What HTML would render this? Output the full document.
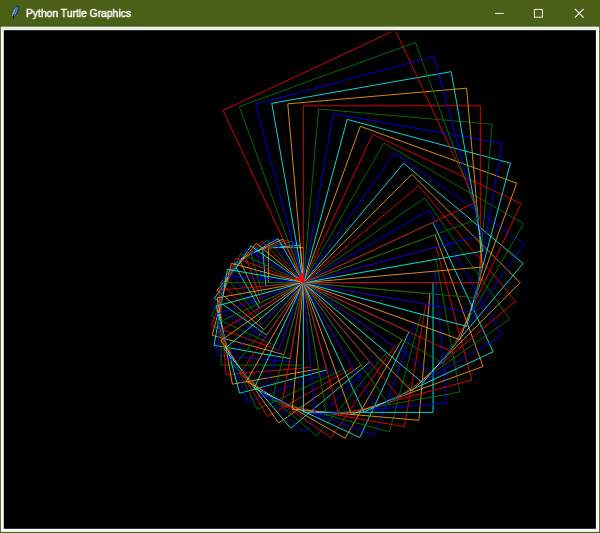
<!DOCTYPE html>
<html><head><meta charset="utf-8"><title>Python Turtle Graphics</title>
<style>
html,body{margin:0;padding:0;background:#4b5f17;overflow:hidden}
body{width:600px;height:533px;position:relative;font-family:"Liberation Sans",sans-serif}
#win{position:absolute;left:0;top:0;width:600px;height:533px;background:#4b5f17}
#title{position:absolute;left:26.3px;top:6.3px;color:#fff;font-size:11px;line-height:15px;font-weight:normal;white-space:nowrap;transform:scaleX(0.938);transform-origin:0 0;will-change:transform;-webkit-text-stroke:0.45px #fff}
svg{position:absolute;left:0;top:0}
polygon,polyline{fill:none;stroke-width:0.84}
line.u{stroke-width:1.1;stroke-opacity:0.3}
</style></head><body>
<div id="win">
<div id="title">Python Turtle Graphics</div>
<svg width="600" height="533" viewBox="0 0 600 533">
<rect x="0" y="25.9" width="600" height="1" fill="#40580a"/>
<rect x="0.9" y="26.8" width="598.2" height="505.1" fill="#fbfbfd"/>
<rect x="0.9" y="26.8" width="598.2" height="3.4" fill="#ececec"/>
<rect x="3.8" y="30.2" width="592.1" height="498.6" fill="#000"/>
<clipPath id="cv"><rect x="4" y="31.7" width="591.5" height="496.6"/></clipPath>
<g id="sq" clip-path="url(#cv)">
<line class="u" x1="303.40" y1="282.70" x2="268.36" y2="282.70" stroke="#ffa500"/>
<polyline points="268.36,282.70 268.36,247.66 303.40,247.66 303.40,282.70" stroke="#ffa500"/>
<line class="u" x1="303.40" y1="282.70" x2="265.88" y2="285.98" stroke="#00ffff"/>
<polyline points="265.88,285.98 262.60,248.46 300.12,245.18 303.40,282.70" stroke="#00ffff"/>
<line class="u" x1="303.40" y1="282.70" x2="263.72" y2="289.70" stroke="#0000ff"/>
<polyline points="263.72,289.70 256.72,250.02 296.40,243.02 303.40,282.70" stroke="#0000ff"/>
<line class="u" x1="303.40" y1="282.70" x2="261.94" y2="293.81" stroke="#008000"/>
<polyline points="261.94,293.81 250.83,252.35 292.29,241.24 303.40,282.70" stroke="#008000"/>
<line class="u" x1="303.40" y1="282.70" x2="260.60" y2="298.28" stroke="#ff0000"/>
<polyline points="260.60,298.28 245.02,255.48 287.82,239.90 303.40,282.70" stroke="#ff0000"/>
<line class="u" x1="303.40" y1="282.70" x2="259.74" y2="303.06" stroke="#ffa500"/>
<polyline points="259.74,303.06 239.38,259.40 283.04,239.04 303.40,282.70" stroke="#ffa500"/>
<line class="u" x1="303.40" y1="282.70" x2="259.40" y2="308.10" stroke="#00ffff"/>
<polyline points="259.40,308.10 234.00,264.10 278.00,238.70 303.40,282.70" stroke="#00ffff"/>
<line class="u" x1="303.40" y1="282.70" x2="259.63" y2="313.35" stroke="#0000ff"/>
<polyline points="259.63,313.35 228.99,269.58 272.75,238.93 303.40,282.70" stroke="#0000ff"/>
<line class="u" x1="303.40" y1="282.70" x2="260.46" y2="318.73" stroke="#008000"/>
<polyline points="260.46,318.73 224.42,275.79 267.37,239.76 303.40,282.70" stroke="#008000"/>
<line class="u" x1="303.40" y1="282.70" x2="261.90" y2="324.20" stroke="#ff0000"/>
<polyline points="261.90,324.20 220.41,282.70 261.90,241.20 303.40,282.70" stroke="#ff0000"/>
<line class="u" x1="303.40" y1="282.70" x2="263.99" y2="329.67" stroke="#ffa500"/>
<polyline points="263.99,329.67 217.02,290.26 256.43,243.29 303.40,282.70" stroke="#ffa500"/>
<line class="u" x1="303.40" y1="282.70" x2="266.72" y2="335.08" stroke="#00ffff"/>
<polyline points="266.72,335.08 214.35,298.40 251.02,246.02 303.40,282.70" stroke="#00ffff"/>
<line class="u" x1="303.40" y1="282.70" x2="270.12" y2="340.35" stroke="#0000ff"/>
<polyline points="270.12,340.35 212.46,307.07 245.75,249.42 303.40,282.70" stroke="#0000ff"/>
<line class="u" x1="303.40" y1="282.70" x2="274.16" y2="345.41" stroke="#008000"/>
<polyline points="274.16,345.41 211.44,316.17 240.69,253.46 303.40,282.70" stroke="#008000"/>
<line class="u" x1="303.40" y1="282.70" x2="278.83" y2="350.19" stroke="#ff0000"/>
<polyline points="278.83,350.19 211.34,325.63 235.91,258.13 303.40,282.70" stroke="#ff0000"/>
<line class="u" x1="303.40" y1="282.70" x2="284.13" y2="354.62" stroke="#ffa500"/>
<polyline points="284.13,354.62 212.21,335.35 231.48,263.43 303.40,282.70" stroke="#ffa500"/>
<line class="u" x1="303.40" y1="282.70" x2="290.02" y2="358.61" stroke="#00ffff"/>
<polyline points="290.02,358.61 214.11,345.22 227.49,269.32 303.40,282.70" stroke="#00ffff"/>
<line class="u" x1="303.40" y1="282.70" x2="296.45" y2="362.10" stroke="#0000ff"/>
<polyline points="296.45,362.10 217.05,355.16 224.00,275.75 303.40,282.70" stroke="#0000ff"/>
<line class="u" x1="303.40" y1="282.70" x2="303.40" y2="365.04" stroke="#008000"/>
<polyline points="303.40,365.04 221.06,365.04 221.06,282.70 303.40,282.70" stroke="#008000"/>
<line class="u" x1="303.40" y1="282.70" x2="310.81" y2="367.34" stroke="#ff0000"/>
<polyline points="310.81,367.34 226.16,374.75 218.76,290.11 303.40,282.70" stroke="#ff0000"/>
<line class="u" x1="303.40" y1="282.70" x2="318.61" y2="368.96" stroke="#ffa500"/>
<polyline points="318.61,368.96 232.35,384.17 217.14,297.91 303.40,282.70" stroke="#ffa500"/>
<line class="u" x1="303.40" y1="282.70" x2="326.75" y2="369.84" stroke="#00ffff"/>
<polyline points="326.75,369.84 239.61,393.20 216.26,306.05 303.40,282.70" stroke="#00ffff"/>
<line class="u" x1="303.40" y1="282.70" x2="335.16" y2="369.95" stroke="#0000ff"/>
<polyline points="335.16,369.95 247.91,401.70 216.15,314.46 303.40,282.70" stroke="#0000ff"/>
<line class="u" x1="303.40" y1="282.70" x2="343.75" y2="369.23" stroke="#008000"/>
<polyline points="343.75,369.23 257.22,409.58 216.87,323.05 303.40,282.70" stroke="#008000"/>
<line class="u" x1="303.40" y1="282.70" x2="352.45" y2="367.66" stroke="#ff0000"/>
<polyline points="352.45,367.66 267.49,416.71 218.44,331.75 303.40,282.70" stroke="#ff0000"/>
<line class="u" x1="303.40" y1="282.70" x2="361.18" y2="365.21" stroke="#ffa500"/>
<polyline points="361.18,365.21 278.66,422.99 220.89,340.48 303.40,282.70" stroke="#ffa500"/>
<line class="u" x1="303.40" y1="282.70" x2="369.84" y2="361.88" stroke="#00ffff"/>
<polyline points="369.84,361.88 290.66,428.31 224.22,349.14 303.40,282.70" stroke="#00ffff"/>
<line class="u" x1="303.40" y1="282.70" x2="378.34" y2="357.64" stroke="#0000ff"/>
<polyline points="378.34,357.64 303.40,432.59 228.46,357.64 303.40,282.70" stroke="#0000ff"/>
<line class="u" x1="303.40" y1="282.70" x2="386.60" y2="352.52" stroke="#008000"/>
<polyline points="386.60,352.52 316.79,435.72 233.58,365.90 303.40,282.70" stroke="#008000"/>
<line class="u" x1="303.40" y1="282.70" x2="394.52" y2="346.51" stroke="#ff0000"/>
<polyline points="394.52,346.51 330.72,437.63 239.59,373.82 303.40,282.70" stroke="#ff0000"/>
<line class="u" x1="303.40" y1="282.70" x2="402.01" y2="339.63" stroke="#ffa500"/>
<polyline points="402.01,339.63 345.08,438.25 246.47,381.31 303.40,282.70" stroke="#ffa500"/>
<line class="u" x1="303.40" y1="282.70" x2="408.98" y2="331.93" stroke="#00ffff"/>
<polyline points="408.98,331.93 359.75,437.52 254.17,388.28 303.40,282.70" stroke="#00ffff"/>
<line class="u" x1="303.40" y1="282.70" x2="415.34" y2="323.44" stroke="#0000ff"/>
<polyline points="415.34,323.44 374.60,435.38 262.66,394.64 303.40,282.70" stroke="#0000ff"/>
<line class="u" x1="303.40" y1="282.70" x2="421.00" y2="314.21" stroke="#008000"/>
<polyline points="421.00,314.21 389.49,431.81 271.89,400.30 303.40,282.70" stroke="#008000"/>
<line class="u" x1="303.40" y1="282.70" x2="425.89" y2="304.30" stroke="#ff0000"/>
<polyline points="425.89,304.30 404.29,426.79 281.80,405.19 303.40,282.70" stroke="#ff0000"/>
<line class="u" x1="303.40" y1="282.70" x2="429.92" y2="293.77" stroke="#ffa500"/>
<polyline points="429.92,293.77 418.85,420.29 292.33,409.22 303.40,282.70" stroke="#ffa500"/>
<line class="u" x1="303.40" y1="282.70" x2="433.04" y2="282.70" stroke="#00ffff"/>
<polyline points="433.04,282.70 433.04,412.34 303.40,412.34 303.40,282.70" stroke="#00ffff"/>
<line class="u" x1="303.40" y1="282.70" x2="435.16" y2="271.17" stroke="#0000ff"/>
<polyline points="435.16,271.17 446.69,402.93 314.93,414.46 303.40,282.70" stroke="#0000ff"/>
<line class="u" x1="303.40" y1="282.70" x2="436.24" y2="259.28" stroke="#008000"/>
<polyline points="436.24,259.28 459.66,392.12 326.82,415.54 303.40,282.70" stroke="#008000"/>
<line class="u" x1="303.40" y1="282.70" x2="436.23" y2="247.11" stroke="#ff0000"/>
<polyline points="436.23,247.11 471.82,379.94 338.99,415.53 303.40,282.70" stroke="#ff0000"/>
<line class="u" x1="303.40" y1="282.70" x2="435.09" y2="234.77" stroke="#ffa500"/>
<polyline points="435.09,234.77 483.03,366.46 351.33,414.39 303.40,282.70" stroke="#ffa500"/>
<line class="u" x1="303.40" y1="282.70" x2="432.80" y2="222.36" stroke="#00ffff"/>
<polyline points="432.80,222.36 493.14,351.76 363.74,412.10 303.40,282.70" stroke="#00ffff"/>
<polygon points="303.40,282.70 429.32,210.00 502.02,335.92 376.10,408.62" stroke="#0000ff"/>
<polygon points="303.40,282.70 424.66,197.79 509.56,319.05 388.31,403.96" stroke="#008000"/>
<polygon points="303.40,282.70 418.81,185.86 515.65,301.27 400.24,398.11" stroke="#ff0000"/>
<polygon points="303.40,282.70 411.79,174.31 520.18,282.70 411.79,391.09" stroke="#ffa500"/>
<polygon points="303.40,282.70 403.62,163.26 523.05,263.48 422.84,382.92" stroke="#00ffff"/>
<polygon points="303.40,282.70 394.33,152.83 524.20,243.77 433.27,373.63" stroke="#0000ff"/>
<polygon points="303.40,282.70 383.98,143.12 523.56,223.71 442.98,363.28" stroke="#008000"/>
<polygon points="303.40,282.70 372.62,134.25 521.07,203.47 451.85,351.92" stroke="#ff0000"/>
<polygon points="303.40,282.70 360.32,126.31 516.71,183.23 459.79,339.62" stroke="#ffa500"/>
<polygon points="303.40,282.70 347.15,119.41 510.44,163.16 466.69,326.45" stroke="#00ffff"/>
<polygon points="303.40,282.70 333.21,113.63 502.28,143.44 472.47,312.51" stroke="#0000ff"/>
<polygon points="303.40,282.70 318.59,109.06 492.24,124.25 477.04,297.89" stroke="#008000"/>
<polygon points="303.40,282.70 303.40,105.77 480.33,105.77 480.33,282.70" stroke="#ff0000"/>
<polygon points="303.40,282.70 287.75,103.82 466.63,88.17 482.28,267.05" stroke="#ffa500"/>
<polygon points="303.40,282.70 271.76,103.28 451.18,71.64 482.82,251.06" stroke="#00ffff"/>
<polygon points="303.40,282.70 255.57,104.18 434.09,56.35 481.92,234.87" stroke="#0000ff"/>
<polygon points="303.40,282.70 239.29,106.56 415.43,42.45 479.54,218.59" stroke="#008000"/>
<polygon points="303.40,282.70 223.07,110.44 395.34,30.11 475.66,202.37" stroke="#ff0000"/>
</g>
<g id="turtle"><polygon points="304,282.4 295.5,278.6 300.3,277.5 302.9,273.3" style="fill:#ff0000;stroke:#ff0000;stroke-width:1.1;stroke-linejoin:miter"/></g>
<g id="icons" stroke="#f4f4f4" fill="none" stroke-width="0.95">
<line x1="495" y1="13.4" x2="503.8" y2="13.4"/>
<rect x="534.4" y="9.4" width="8" height="7.8"/>
<path d="M574.9 8.9 L583.6 17.6 M583.6 8.9 L574.9 17.6" stroke-width="1.1"/>
</g>
<g id="feather">
<defs><linearGradient id="fg" x1="0" y1="0.2" x2="1" y2="0.5"><stop offset="0" stop-color="#c4dcf8"/><stop offset="0.45" stop-color="#7db0ea"/><stop offset="0.55" stop-color="#4a88d6"/><stop offset="1" stop-color="#3b78c8"/></linearGradient></defs>
<path d="M17.9 6.3 C15.4 6.9 12.7 9.8 12 13.6 L12.2 15.7 L13.3 16.4 L14.4 16.5 C16.6 14.4 18.9 10.4 18.4 7 Z" fill="url(#fg)" stroke="#10180a" stroke-width="0.8" stroke-opacity="0.8"/>
<path d="M14.0 15.2 L14.4 12.6 L16.0 9.4" stroke="#0c1630" stroke-width="0.8" stroke-dasharray="1.2 0.7" fill="none"/>
<path d="M13.1 14.4 L13.9 14.6 L13.6 19.8 L13.2 19.8 Z" fill="#060a04"/>
<rect x="12.1" y="15" width="0.8" height="0.8" fill="#e0e4e0"/>
</g>
</svg>
</div>
</body></html>
